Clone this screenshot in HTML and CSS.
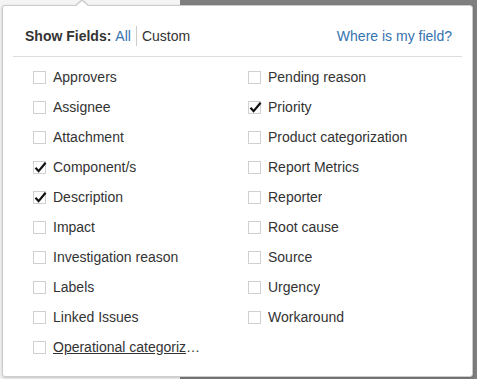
FILE: index.html
```html
<!DOCTYPE html>
<html lang="en">
<head>
  <meta charset="UTF-8" />
  <title>Show Fields</title>
  <link rel="stylesheet" href="styles.css">
</head>
<body>
  <div class="backdrop">
    <div class="backdrop-left"></div>
    <div class="backdrop-right"></div>
  </div>

  <div class="field-picker">
    <div class="picker-header">
      <div class="show-fields">
        <span class="label">Show Fields:</span>
        <a class="mode active" href="#">All</a>
        <span class="mode">Custom</span>
      </div>
      <a class="where-link" href="#">Where is my field?</a>
    </div>

    <ul class="field-list">
      <li class="field"><span class="check"></span><span class="name">Approvers</span></li>
      <li class="field"><span class="check"></span><span class="name">Assignee</span></li>
      <li class="field"><span class="check"></span><span class="name">Attachment</span></li>
      <li class="field checked"><span class="check"><svg viewBox="0 0 13 13"><path d="M1.5 6.8 L4.6 10.2 L11.6 1.8" /></svg></span><span class="name">Component/s</span></li>
      <li class="field checked"><span class="check"><svg viewBox="0 0 13 13"><path d="M1.5 6.8 L4.6 10.2 L11.6 1.8" /></svg></span><span class="name">Description</span></li>
      <li class="field"><span class="check"></span><span class="name">Impact</span></li>
      <li class="field"><span class="check"></span><span class="name">Investigation reason</span></li>
      <li class="field"><span class="check"></span><span class="name">Labels</span></li>
      <li class="field"><span class="check"></span><span class="name">Linked Issues</span></li>
      <li class="field"><span class="check"></span><span class="name underlined">Operational categorization</span></li>
      <li class="field"><span class="check"></span><span class="name">Pending reason</span></li>
      <li class="field checked"><span class="check"><svg viewBox="0 0 13 13"><path d="M1.5 6.8 L4.6 10.2 L11.6 1.8" /></svg></span><span class="name">Priority</span></li>
      <li class="field"><span class="check"></span><span class="name">Product categorization</span></li>
      <li class="field"><span class="check"></span><span class="name">Report Metrics</span></li>
      <li class="field"><span class="check"></span><span class="name">Reporter</span></li>
      <li class="field"><span class="check"></span><span class="name">Root cause</span></li>
      <li class="field"><span class="check"></span><span class="name">Source</span></li>
      <li class="field"><span class="check"></span><span class="name">Urgency</span></li>
      <li class="field"><span class="check"></span><span class="name">Workaround</span></li>
    </ul>
  </div>
</body>
</html>
```

FILE: styles.css
```css
body {
  margin: 0;
  padding: 0;
  font-family: Arial, 'Liberation Sans', sans-serif;
  font-size: 14px;
  color: #333;
  overflow: hidden;
}

.backdrop {
  display: flex;
  height: 379px;
}

.backdrop-left {
  width: 180px;
  background: #f4f4f4;
}

.backdrop-right {
  flex: 1;
  background: #7f7f7f;
}

/* Popup lies over the page */
.field-picker {
  position: absolute;
  left: 2px;
  top: 5px;
  width: 469px;
  height: 370px;
  background: #fff;
  border: 1px solid #ccc;
  border-radius: 3px;
  box-shadow: 0 1px 3px rgba(0, 0, 0, 0.2);
}

.field-picker::before,
.field-picker::after {
  content: "";
  position: absolute;
  border-style: solid;
  border-color: transparent;
  border-top: 0;
}

.field-picker::before {
  top: -7px;
  left: 71px;
  border-width: 0 8px 7px;
  border-bottom-color: #ccc;
}

.field-picker::after {
  top: -5px;
  left: 72px;
  border-width: 0 7px 6px;
  border-bottom-color: #fff;
}

.picker-header {
  display: flex;
  justify-content: space-between;
  align-items: center;
  margin: 0 10px;
  padding: 20px 10px 10px 12px;
  border-bottom: 1px solid #ddd;
  line-height: 20px;
}

.show-fields {
  display: flex;
  align-items: center;
}

.show-fields .label {
  font-weight: bold;
  margin-right: 4px;
}

.mode {
  color: #333;
  text-decoration: none;
  padding: 0 5px;
}

.mode.active {
  color: #3572b0;
  padding-left: 0;
  border-right: 1px solid #ccc;
}

.where-link {
  color: #3572b0;
  text-decoration: none;
}

.field-list {
  list-style: none;
  margin: 0;
  padding: 5px 0 0 30px;
  display: grid;
  grid-template-rows: repeat(10, 30px);
  grid-template-columns: 215px 215px;
  grid-auto-flow: column;
}

.field {
  display: flex;
  align-items: center;
  gap: 7px;
}

.check {
  width: 13px;
  height: 13px;
  box-sizing: border-box;
  border: 1px solid #d0d0d0;
  flex-shrink: 0;
  position: relative;
}

.check svg {
  position: absolute;
  left: 0;
  top: -1px;
  width: 13px;
  height: 13px;
  fill: none;
  stroke: #111;
  stroke-width: 2.2;
}

.name {
  white-space: nowrap;
  overflow: hidden;
  text-overflow: ellipsis;
  max-width: 151px;
}

.name.underlined {
  text-decoration: underline;
}
```
